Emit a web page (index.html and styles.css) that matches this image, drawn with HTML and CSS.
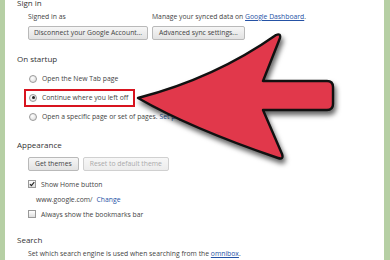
FILE: index.html
```html
<!DOCTYPE html>
<html>
<head>
<meta charset="utf-8">
<link rel="stylesheet" href="styles.css">
</head>
<body>
<div class="page">
  <div class="heading first">Sign in</div>
  <div class="line signed">
    <span class="signed-label">Signed in as</span>
    <span>Manage your synced data on <a class="link u">Google Dashboard</a>.</span>
  </div>
  <div class="buttons sync">
    <span class="btn btn-disconnect">Disconnect your Google Account...</span>
    <span class="btn">Advanced sync settings...</span>
  </div>

  <div class="heading startup">On startup</div>
  <div class="options">
    <div class="opt"><span class="radio"></span><span>Open the New Tab page</span></div>
    <div class="opt"><span class="hl"><span class="radio on"></span><span>Continue where you left off</span></span></div>
    <div class="opt"><span class="radio"></span><span>Open a specific page or set of pages. <a class="link">Set pages</a></span></div>
  </div>

  <div class="heading appearance">Appearance</div>
  <div class="buttons themes">
    <span class="btn">Get themes</span>
    <span class="btn disabled">Reset to default theme</span>
  </div>
  <div class="checks">
    <div class="chk"><span class="box checked"><svg viewBox="0 0 10 10" width="8" height="8"><path d="M1.5 5.2 L4 7.8 L8.8 1.8" fill="none" stroke="#222" stroke-width="1.8"/></svg></span><span>Show Home button</span></div>
    <div class="chk home"><span>www.google.com/</span><a class="link change">Change</a></div>
    <div class="chk"><span class="box"></span><span>Always show the bookmarks bar</span></div>
  </div>

  <div class="heading search">Search</div>
  <div class="line desc">Set which search engine is used when searching from the <a class="link u">omnibox</a>.</div>

  <svg class="arrow" width="390" height="260" viewBox="0 0 390 260">
    <path d="M138 98 Q215 78 276 35 Q281 33 280 38 L263 81 L327 81 Q333 81 333 87 L333 104 Q333 110 327 110 L263 110 L282 154 Q284 160 278 158 Q190 128 138 98 Z" fill="#e1384b" stroke="#111" stroke-width="2.4" stroke-linejoin="round"/>
  </svg>
</div>
</body>
</html>
```
FILE: styles.css
```css
html, body {
  margin: 0;
  padding: 0;
  background: #fff;
}
.page {
  position: relative;
  width: 390px;
  height: 260px;
  box-sizing: border-box;
  border-left: 5px solid #b6cfa4;
  border-right: 6px solid #b6cfa4;
  overflow: hidden;
  font-family: "Open Sans", "Noto Sans", sans-serif;
  font-size: 6.8px;
  color: #444;
  padding-left: 12px;
}
.heading {
  font-size: 8px;
  line-height: 12px;
  height: 12px;
  color: #333;
}
.heading.first { margin-top: -3px; }
.heading.startup { margin-top: 13px; }
.heading.appearance { margin-top: 13px; }
.heading.search { margin-top: 12.5px; }
.line {
  line-height: 10px;
  height: 10px;
  padding-left: 11px;
  white-space: nowrap;
}
.signed { margin-top: 3px; display: flex; }
.signed-label { width: 124px; }
.desc { margin-top: 3px; }
.link { color: #2552a5; }
.link.u { text-decoration: underline; }
.buttons {
  display: flex;
  gap: 4px;
  padding-left: 11px;
  height: 14px;
}
.sync { margin-top: 4px; }
.btn {
  box-sizing: border-box;
  height: 14px;
  line-height: 12px;
  padding: 0 6px;
  border: 1px solid #b9b9b9;
  border-radius: 2px;
  background: linear-gradient(#f6f6f6, #e2e2e2);
  color: #444;
  white-space: nowrap;
}
.btn-disconnect { width: 120px; text-align: center; padding: 0; }
.btn.disabled { color: #aaa; background: linear-gradient(#f7f7f7, #ececec); border-color: #d0d0d0; }
.themes { margin-top: 6px; }
.options { margin-top: 4px; padding-left: 12px; }
.opt {
  height: 19px;
  display: flex;
  align-items: center;
  white-space: nowrap;
}
.hl {
  display: flex;
  align-items: center;
  outline: 2.5px solid #d8141f;
  outline-offset: 2px;
  padding: 0 3px 0 1px;
  margin-left: -1px;
  line-height: 10px;
}
.radio {
  box-sizing: border-box;
  width: 8px;
  height: 8px;
  border-radius: 50%;
  border: 1px solid #9a9a9a;
  background: radial-gradient(circle at 40% 35%, #fff, #d6d6d6);
  margin-right: 5px;
  position: relative;
  flex: none;
}
.radio.on::after {
  content: "";
  position: absolute;
  left: 1.5px;
  top: 1.5px;
  width: 3px;
  height: 3px;
  border-radius: 50%;
  background: #222;
}
.checks { margin-top: 5.5px; padding-left: 11px; }
.chk {
  height: 15px;
  display: flex;
  align-items: center;
  white-space: nowrap;
}
.box {
  box-sizing: border-box;
  width: 8px;
  height: 8px;
  border: 1px solid #999;
  background: linear-gradient(#fff, #dedede);
  margin-right: 5px;
  display: flex;
  align-items: center;
  justify-content: center;
  flex: none;
}
.box svg { display: block; }
.home { padding-left: 8px; }
.change { margin-left: 4px; }
.arrow {
  position: absolute;
  left: -5px;
  top: 0;
  pointer-events: none;
  filter: drop-shadow(2px 4px 2.5px rgba(0,0,0,0.6));
}
```
